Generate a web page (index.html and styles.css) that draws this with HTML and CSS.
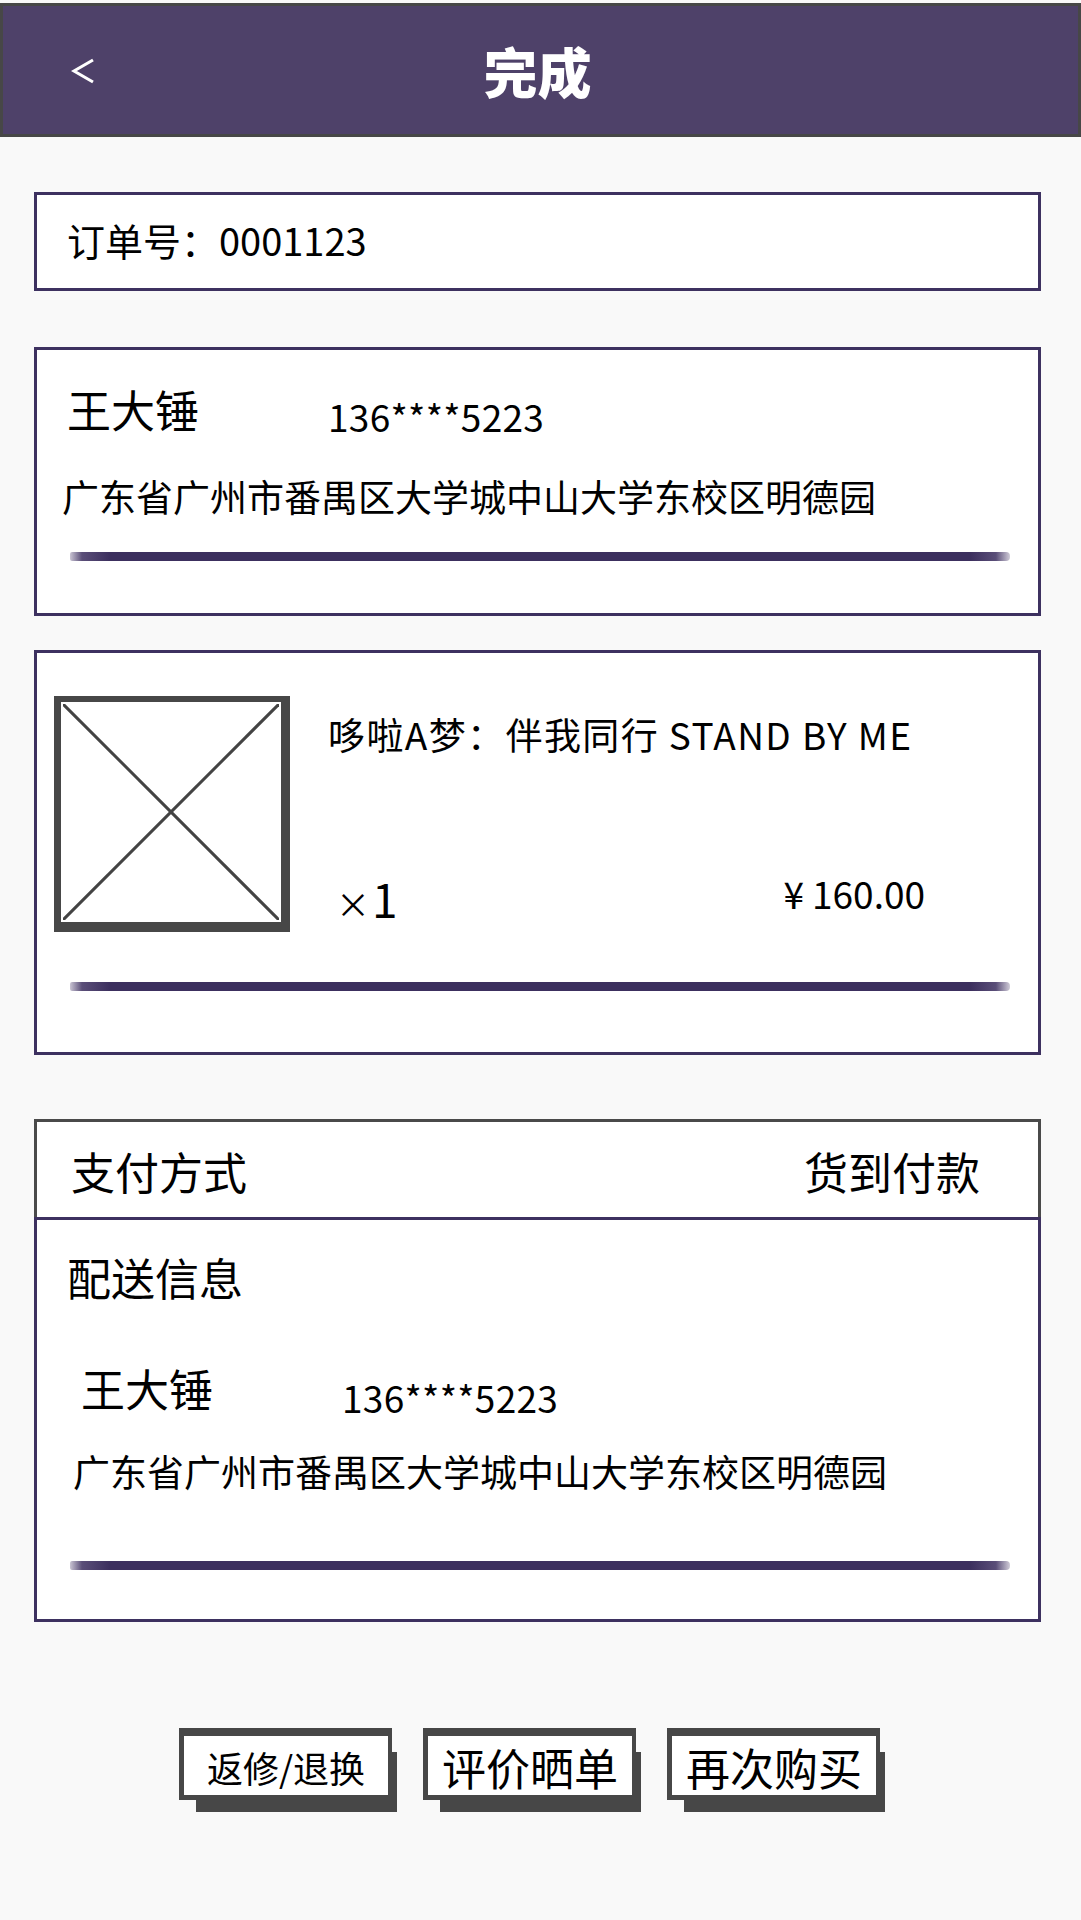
FILE: index.html
```html
<!DOCTYPE html>
<html lang="zh-CN">
<head>
    <meta charset="UTF-8">
    <meta name="viewport" content="width=device-width, initial-scale=1.0">
    <title>完成</title>
    <link rel="stylesheet" href="styles.css">
</head>
<body>
    <header class="top-bar">
        <a class="back" href="#">
            <svg width="26" height="30" viewBox="0 0 26 30">
                <polyline points="22,4 3,15 22,26" fill="none" stroke="#ffffff" stroke-width="3"/>
            </svg>
        </a>
        <h1 class="title">完成</h1>
        <span></span>
    </header>

    <main class="content">
        <section class="card order-card">订单号：0001123</section>

        <section class="card address-card">
            <div class="contact">
                <span class="name">王大锤</span>
                <span class="phone">136****5223</span>
            </div>
            <p class="address">广东省广州市番禺区大学城中山大学东校区明德园</p>
            <div class="rule"></div>
        </section>

        <section class="card product-card">
            <div class="product">
                <div class="cover">
                    <svg width="100%" height="100%" viewBox="0 0 100 100" preserveAspectRatio="none">
                        <line x1="0" y1="0" x2="100" y2="100" stroke="#434343" stroke-width="1.4"/>
                        <line x1="100" y1="0" x2="0" y2="100" stroke="#434343" stroke-width="1.4"/>
                    </svg>
                </div>
                <div class="product-info">
                    <p class="product-title">哆啦A梦：伴我同行 STAND BY ME</p>
                    <div class="price-row">
                        <span class="qty"><span class="times">×</span>1</span>
                        <span class="price"><span class="yen">¥</span>160.00</span>
                    </div>
                </div>
            </div>
            <div class="rule product-rule"></div>
        </section>

        <section class="pay-card">
            <span>支付方式</span>
            <span>货到付款</span>
        </section>
        <section class="card delivery-card">
            <h2 class="section-title">配送信息</h2>
            <div class="contact contact-delivery">
                <span class="name">王大锤</span>
                <span class="phone">136****5223</span>
            </div>
            <p class="address address-delivery">广东省广州市番禺区大学城中山大学东校区明德园</p>
            <div class="rule delivery-rule"></div>
        </section>

        <div class="actions">
            <button class="action small">返修/退换</button>
            <button class="action">评价晒单</button>
            <button class="action">再次购买</button>
        </div>
    </main>
</body>
</html>
```

FILE: styles.css
```css
* {
    margin: 0;
    padding: 0;
    box-sizing: border-box;
}

body {
    font-family: "Noto Sans CJK SC", "Noto Sans", sans-serif;
    background: #f9f9f9;
    color: #000000;
    width: 1081px;
    min-height: 1920px;
}

/* header */
.top-bar {
    margin-top: 3px;
    height: 134px;
    background: #4e4169;
    border: 3px solid #474747;
    display: grid;
    grid-template-columns: 1fr auto 1fr;
    align-items: center;
}

.back {
    display: flex;
    padding-left: 68px;
    padding-top: 2px;
}

.title {
    color: #ffffff;
    font-size: 54px;
    font-weight: 900;
    line-height: 1;
    padding-top: 2px;
    margin-right: 6px;
}

/* page content */
.content {
    padding: 55px 40px 0 34px;
}

.card {
    background: #ffffff;
    border: 3px solid #3d3160;
}

.order-card {
    height: 99px;
    display: flex;
    align-items: center;
    padding-left: 30px;
    padding-bottom: 4px;
    font-size: 38px;
}

.address-card {
    margin-top: 56px;
    padding: 33px 28px 52px 30px;
}

.contact {
    display: flex;
    align-items: flex-start;
}

.name {
    font-size: 44px;
    line-height: 1.2;
}

.phone {
    font-size: 37px;
    line-height: 1.2;
    margin-left: 129px;
    margin-top: 11px;
    letter-spacing: 0.3px;
}

.address {
    font-size: 37px;
    line-height: 1.2;
    margin-top: 36px;
    margin-left: -5px;
}

.rule {
    height: 9px;
    margin-top: 33px;
    margin-left: 3px;
    border-radius: 2px 4px 4px 2px;
    background: linear-gradient(to right, #c9c4d3 0, #5a4e78 12px, #3c2f5e 40px, #3c2f5e calc(100% - 40px), #5a4e78 calc(100% - 14px), #d0ccd8 100%);
}

/* product */
.product-card {
    margin-top: 34px;
    padding: 43px 28px 61px 17px;
}

.product {
    display: flex;
}

.cover {
    width: 236px;
    height: 236px;
    flex: none;
    background: #ffffff;
    border-style: solid;
    border-color: #474747;
    border-width: 6px 9px 10px 7px;
    padding: 2px;
}

.cover svg {
    display: block;
}

.product-info {
    flex: 1;
    padding-left: 38px;
}

.product-title {
    font-size: 37px;
    line-height: 1.2;
    margin-top: 16px;
    letter-spacing: 1.4px;
}

.price-row {
    display: flex;
    justify-content: space-between;
    align-items: flex-end;
    margin-top: 115px;
    padding-left: 8px;
    padding-right: 85px;
}

.qty {
    font-size: 46px;
    line-height: 1.2;
    margin-bottom: -6px;
}

.times {
    font-size: 34px;
    margin-right: 2px;
}

.price {
    font-size: 37px;
    line-height: 1.2;
    padding-bottom: 5px;
}

.yen {
    margin-right: 8px;
}

.product-rule {
    margin-top: 50px;
    margin-left: 16px;
}

/* payment + delivery */
.pay-card {
    margin-top: 64px;
    height: 98px;
    background: #ffffff;
    border: 3px solid #4a4a4a;
    border-bottom: none;
    display: flex;
    justify-content: space-between;
    align-items: center;
    padding: 3px 58px 0 34px;
    font-size: 44px;
}

.delivery-card {
    padding: 31px 28px 49px 30px;
}

.section-title {
    font-size: 44px;
    font-weight: normal;
    line-height: 1.2;
}

.contact-delivery {
    margin-top: 58px;
    padding-left: 14px;
}

.contact-delivery .phone {
    margin-top: 13px;
}

.address-delivery {
    margin-top: 30px;
    margin-left: 6px;
}

.delivery-rule {
    margin-top: 68px;
}

/* buttons */
.actions {
    display: flex;
    justify-content: center;
    gap: 31px;
    margin-top: 106px;
    padding-right: 16px;
}

.action {
    width: 213px;
    height: 72px;
    background: #ffffff;
    border-style: solid;
    border-color: #474747;
    border-width: 8px 4px 5px 5px;
    box-shadow: 11px 18px 0 -6px #474747;
    font-family: inherit;
    font-size: 44px;
    line-height: 1;
    color: #000000;
    cursor: pointer;
    padding-top: 2px;
}

.action.small {
    font-size: 36px;
}
```
